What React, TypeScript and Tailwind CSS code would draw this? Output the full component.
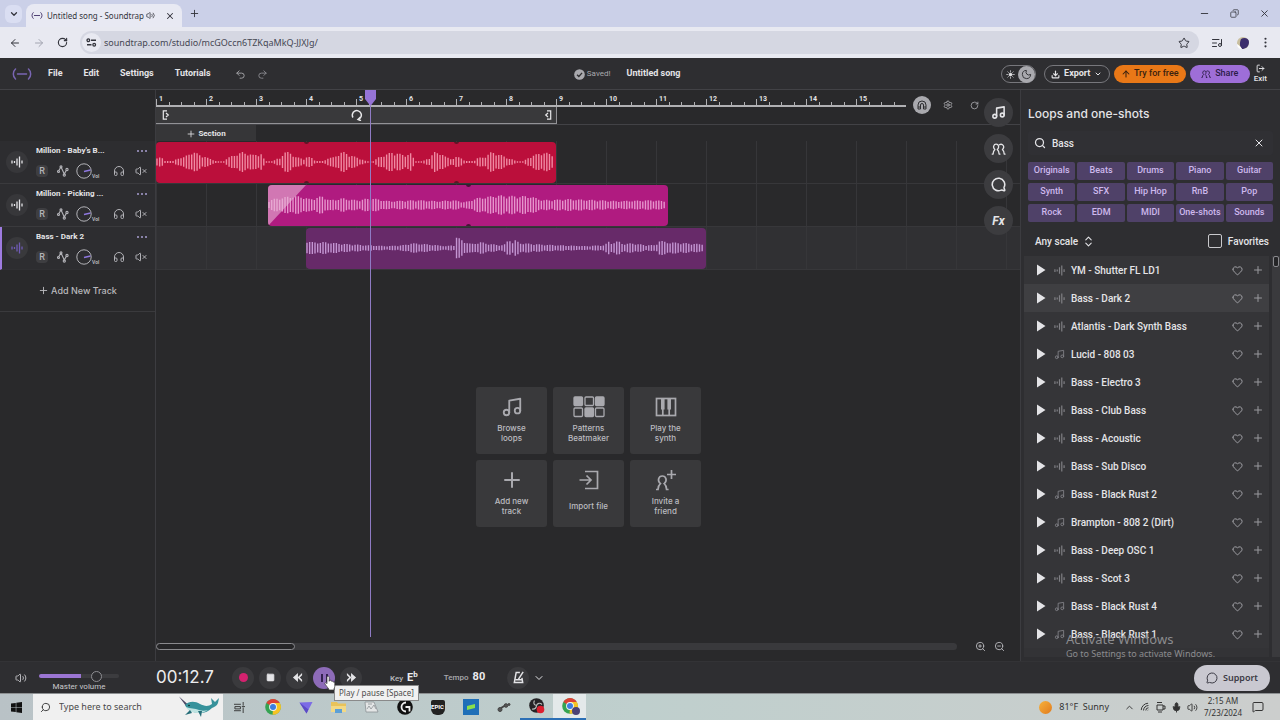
import React from "react";
import {
  ArrowLeft,
  ArrowRight,
  ArrowUp,
  ChevronDown,
  ChevronUp,
  ChevronsUpDown,
  Copy,
  Download,
  EllipsisVertical,
  Headphones,
  Heart,
  ListMusic,
  LogOut,
  MessageCircle,
  MessageSquare,
  Mic,
  Minus,
  Moon,
  Music,
  Play,
  Plus,
  Redo2,
  RotateCw,
  Search,
  Settings,
  SlidersHorizontal,
  Square,
  Star,
  Sun,
  Undo2,
  Volume2,
  VolumeX,
  Wifi,
  X,
  ZoomIn,
  ZoomOut,
} from "lucide-react";

type Point = [number, number];

const beatLoop: Point[] = [
  [0, 5], [5, 5], [9, 1], [18, 1], [21, 4], [28, 5], [35, 10], [38, 10], [50, 5], [58, 2], [60, 0.8], [68, 0.8],
  [71, 4], [78, 7], [86, 10], [92, 9], [98, 7], [105, 9], [108, 3], [110, 0.8], [117, 0.8], [120, 3], [124, 4],
  [128, 10], [134, 10], [140, 5], [149, 3],
];

const pickingWave: Point[] = [
  [0, 4], [5, 6], [22, 9], [32, 9], [42, 6], [54, 9], [62, 5], [75, 7], [88, 5], [104, 7], [120, 4], [150, 5],
  [170, 4], [186, 5], [196, 3], [201, 4], [208, 7], [230, 10], [248, 9], [262, 9], [275, 5], [300, 6], [330, 5],
  [350, 4], [385, 5], [399, 4],
];

const darkWave: Point[] = [
  [0, 8], [6, 6], [20, 6], [40, 4], [60, 3], [80, 2], [98, 3], [106, 5], [120, 4], [130, 3], [140, 2], [148, 3],
  [150, 12], [153, 10], [158, 7], [165, 4], [175, 6], [185, 4], [195, 3], [200, 4], [203, 11], [206, 5],
  [209, 8], [215, 5], [230, 4], [250, 3], [280, 2], [299, 3], [302, 7], [306, 5], [312, 7], [318, 4], [325, 5],
  [340, 3], [350, 3], [353, 8], [360, 6], [380, 5], [395, 4], [399, 5],
];

function amplitude(points: Point[], x: number): number {
  for (let i = 1; i < points.length; i++) {
    const [x0, y0] = points[i - 1];
    const [x1, y1] = points[i];
    if (x <= x1) return y0 + ((y1 - y0) * (x - x0)) / (x1 - x0);
  }
  return points[points.length - 1][1];
}

function Waveform({ points, period, color }: { points: Point[]; period: number; color: string }) {
  const step = 2.67;
  const bars = Array.from({ length: 149 }, (_, i) => {
    const x = 1 + i * step;
    const base = amplitude(points, x % period);
    const jitter = base < 1.5 ? 1 : 0.68 + 0.32 * Math.abs(Math.sin(i * 2.4));
    const a = base * jitter;
    return `M${x.toFixed(2)} ${(20 - a).toFixed(2)}V${(20 + a).toFixed(2)}`;
  });
  return (
    <svg viewBox="0 0 400 41" className="block h-full w-full" preserveAspectRatio="none" aria-hidden="true">
      <path d={bars.join("")} stroke={color} strokeWidth="1.400" fill="none" />
    </svg>
  );
}

function WaveIcon({ className }: { className: string }) {
  return (
    <svg viewBox="0 0 12 12" className={className} fill="none" stroke="currentColor" strokeWidth="1.300" aria-hidden="true">
      <path d="M1 4.500v3M3.500 5v2M6 2.500v7M8.500.5v11M11 4.500v3" />
    </svg>
  );
}

function LogoMark({ className }: { className: string }) {
  return (
    <svg viewBox="0 0 20 12" className={className} fill="none" stroke="currentColor" strokeWidth="1.500" strokeLinecap="round" aria-hidden="true">
      <path d="M3.500 1C.6 3.500.6 8.500 3.500 11M16.500 1c2.900 2.500 2.900 7.500 0 10M5.500 6h9" />
    </svg>
  );
}

function PeopleIcon({ className }: { className: string }) {
  return (
    <svg viewBox="0 0 24 20" className={className} fill="none" stroke="currentColor" strokeWidth="2.200" strokeLinecap="round" strokeLinejoin="round" aria-hidden="true">
      <path d="M1.500 18.500H3c0-3.500.8-5.500 3-7.500-4-3.500-2-9 2-9s6 5.500 2 9c2.200 2 3 4 3 7.500M13.500 3c3.500-2.500 8 .5 7 4.500-.3 1.500-1 2.500-2 3.500 2.200 2 3 4 3 7.500h1.500M13 18.500h1.500" />
    </svg>
  );
}

function PersonPlusIcon() {
  return (
    <svg viewBox="0 0 22 22" className="h-[22px] w-[22px]" fill="none" stroke="currentColor" strokeWidth="1.700" aria-hidden="true">
      <path d="M1 20.500h2c0-3 .6-4.400 2.400-5.900-3.400-2.800-1.900-7.600 1.900-7.600s5.300 4.800 1.900 7.600c1.800 1.500 2.400 2.900 2.400 5.900h2M16.500 1v9M12 5.500h9" />
    </svg>
  );
}

function PatternsIcon() {
  return (
    <svg viewBox="0 0 32 22" className="h-[22px] w-8" fill="none" stroke="currentColor" strokeWidth="1.300" aria-hidden="true">
      <rect x="1" y="1" width="8.500" height="8.500" rx="1" fill="currentColor" />
      <rect x="12" y="1" width="8.500" height="8.500" rx="1" />
      <rect x="22.500" y="1" width="8.500" height="8.500" rx="1" fill="currentColor" />
      <rect x="1" y="12" width="8.500" height="8.500" rx="1" />
      <rect x="12" y="12" width="8.500" height="8.500" rx="1" fill="currentColor" />
      <rect x="22.500" y="12" width="8.500" height="8.500" rx="1" />
    </svg>
  );
}

function PianoIcon() {
  return (
    <svg viewBox="0 0 22 20" className="h-5 w-[22px]" fill="none" stroke="currentColor" strokeWidth="1.700" aria-hidden="true">
      <rect x="1.500" y="1.500" width="19" height="17" />
      <path d="M7.800 12v6M14.200 12v6" />
      <path d="M6 2h3.600v10.500H6zM12.400 2H16v10.500h-3.600z" fill="currentColor" stroke="none" />
    </svg>
  );
}

function ImportIcon() {
  return (
    <svg viewBox="0 0 22 20" className="h-5 w-[22px]" fill="none" stroke="currentColor" strokeWidth="1.700" aria-hidden="true">
      <path d="M7 1.500h12.500v17H7M1.500 10h11M8.500 5.500 13 10l-4.500 4.500" />
    </svg>
  );
}

function AutomationIcon() {
  return (
    <svg viewBox="0 0 12 12" className="h-3 w-3" fill="none" stroke="currentColor" strokeWidth="1.100" aria-hidden="true">
      <path d="M1.800 5.500 4 2l3.300 7L9.500 5" />
      <circle cx="1.500" cy="6.500" r="1" />
      <circle cx="4" cy="1.800" r="1" />
      <circle cx="7.300" cy="10" r="1.100" />
      <circle cx="10" cy="4.500" r="1.100" />
    </svg>
  );
}

function KnobIcon() {
  return (
    <svg viewBox="0 0 16 16" className="h-4 w-4" fill="none" stroke="currentColor" strokeWidth="1" aria-hidden="true">
      <circle cx="8" cy="8" r="7.200" />
      <path d="M8 8.500 14.500 7" stroke="#8f78e0" strokeWidth="1.300" />
    </svg>
  );
}

function MetronomeIcon() {
  return (
    <svg viewBox="0 0 14 14" className="h-[13px] w-[13px]" fill="none" stroke="currentColor" strokeWidth="1.600" aria-hidden="true">
      <path d="M8.500 1.500H4.500L2.500 12.500h9l-.8-5M4 9.500h7M6.500 9.500 12 1" />
    </svg>
  );
}

function MarkerIcon({ flip = false }: { flip?: boolean }) {
  return (
    <svg viewBox="0 0 8 10" className={flip ? "h-[10px] w-2 -scale-x-100" : "h-[10px] w-2"} fill="none" stroke="#e8e8ea" strokeWidth="1.200" aria-hidden="true">
      <path d="M5 .8H1.300v8.400H5M4 3l2.300 2L4 7" />
    </svg>
  );
}

function ChromeLogo() {
  return (
    <svg viewBox="0 0 16 16" className="h-4 w-4" aria-hidden="true">
      <circle cx="8" cy="8" r="7.800" fill="#35a352" />
      <path d="M8 8 1.300 4A7.800 7.800 0 0 1 14.800 4Z" fill="#dd4134" />
      <path d="M8 8V4h6.800A7.800 7.800 0 0 1 7.600 15.800Z" fill="#f6c324" />
      <circle cx="8" cy="8" r="3.900" fill="#f3f3f3" />
      <circle cx="8" cy="8" r="3" fill="#3d7de0" />
    </svg>
  );
}

function Narwhal() {
  return (
    <svg viewBox="0 0 42 22" className="h-[22px] w-[42px]" aria-hidden="true">
      <path d="m1 .5 9 8-2 1.500z" fill="#4a4663" />
      <path d="M7 9c4-4 10-4 15-1 4 2 8 3 12 0l-1-6 4 4 4-4-1 5c-1 3-4 4-6 5-3 3-7 5-12 5-7 0-13-3-15-8Z" fill="#37929b" />
      <path d="M8 11c4 2 9 1 13 3 3 1 6 1 9 0-3 2-6 3-9 3-6 0-11-2-13-6Z" fill="#bfe3e1" />
      <path d="m12 14-5 5 7-2ZM20 15l3 6 1-6Z" fill="#256c78" />
      <circle cx="11" cy="9.500" r=".8" fill="#122" />
    </svg>
  );
}

const menus = ["File", "Edit", "Settings", "Tutorials"];
const tracks = ["Million - Baby's B...", "Million - Picking ...", "Bass - Dark 2"];
const bars = Array.from({ length: 15 }, (_, i) => i + 1);
const genres = [
  "Originals", "Beats", "Drums", "Piano", "Guitar",
  "Synth", "SFX", "Hip Hop", "RnB", "Pop",
  "Rock", "EDM", "MIDI", "One-shots", "Sounds",
];
const loops: { name: string; midi?: boolean }[] = [
  { name: "YM - Shutter FL LD1" },
  { name: "Bass - Dark 2" },
  { name: "Atlantis - Dark Synth Bass" },
  { name: "Lucid - 808 03", midi: true },
  { name: "Bass - Electro 3" },
  { name: "Bass - Club Bass" },
  { name: "Bass - Acoustic" },
  { name: "Bass - Sub Disco" },
  { name: "Bass - Black Rust 2", midi: true },
  { name: "Brampton - 808 2 (Dirt)", midi: true },
  { name: "Bass - Deep OSC 1" },
  { name: "Bass - Scot 3" },
  { name: "Bass - Black Rust 4", midi: true },
  { name: "Bass - Black Rust 1", midi: true },
];

function BrowserChrome() {
  return (
    <div className="shrink-0 bg-[#cbd0e8] font-['Noto_Sans',sans-serif] text-[#33343c]">
      <div className="flex h-[27px] items-end pl-[5px]">
        <button aria-label="Search tabs" className="mb-[4px] flex h-[18px] w-[17px] items-center justify-center rounded-md bg-[#dadef2]">
          <ChevronDown className="h-2.5 w-2.5" strokeWidth={3} />
        </button>
        <div className="ml-[4px] flex h-[23px] w-[156px] items-center rounded-t-lg bg-[#e8e9f3] pl-[5px] pr-[7px]">
          <LogoMark className="h-[7px] w-3 shrink-0 text-[#3b2a63]" />
          <span className="ml-[4px] flex-1 whitespace-nowrap text-[8px]">Untitled song - Soundtrap</span>
          <Volume2 className="mr-[10px] h-[9px] w-[9px] shrink-0" />
          <button aria-label="Close tab">
            <X className="h-2.5 w-2.5" strokeWidth={2.5} />
          </button>
        </div>
        <button aria-label="New tab" className="mb-[8px] ml-[7px]">
          <Plus className="h-[11px] w-[11px]" />
        </button>
        <div className="mb-[8px] ml-auto mr-[10px] flex items-center gap-5">
          <button aria-label="Minimize"><Minus className="h-[11px] w-[11px]" /></button>
          <button aria-label="Restore"><Copy className="h-[9px] w-[9px] -scale-x-100" /></button>
          <button aria-label="Close"><X className="h-[11px] w-[11px]" /></button>
        </div>
      </div>
      <div className="flex h-[31px] items-center bg-[#e8e9f1] pl-[9px] pr-[8px]">
        <button aria-label="Back"><ArrowLeft className="h-3 w-3" /></button>
        <button aria-label="Forward" className="ml-3 text-[#a2a4b0]"><ArrowRight className="h-3 w-3" /></button>
        <button aria-label="Reload" className="ml-3"><RotateCw className="h-[11px] w-[11px]" strokeWidth={2.5} /></button>
        <div className="ml-[12px] flex h-[23px] flex-1 items-center rounded-full bg-[#d5d7e2] pl-[2px] pr-[9px]">
          <span className="flex h-[19px] w-[19px] items-center justify-center rounded-full bg-[#e8e9f1]">
            <svg viewBox="0 0 12 10" className="h-[9px] w-[11px]" fill="none" stroke="currentColor" strokeWidth="1.400" aria-hidden="true">
              <circle cx="2.500" cy="2.500" r="1.500" />
              <path d="M5.500 2.500H11M1 7.500h5" />
              <circle cx="9" cy="7.500" r="1.500" />
            </svg>
          </span>
          <input
            aria-label="Address"
            className="ml-[3px] min-w-0 flex-1 bg-transparent text-[9px] text-[#454753] outline-none"
            defaultValue="soundtrap.com/studio/mcGOccn6TZKqaMkQ-JJXJg/"
          />
          <button aria-label="Bookmark"><Star className="h-3 w-3" /></button>
        </div>
        <button aria-label="Media controls" className="ml-[12px]"><ListMusic className="h-3 w-3" /></button>
        <button aria-label="Profile" className="ml-[13px] flex">
          <svg viewBox="0 0 14 14" className="h-[14px] w-[14px]" aria-hidden="true">
            <circle cx="7" cy="7" r="6" fill="#c9bf9f" />
            <path d="M5 3c3-2 8-1 8 3 0 5-4 7-7 7-2-2-3-5-1-10Z" fill="#3c2e6d" />
            <path d="M1 8c2 1 4 3 5 5-3 0-5-2-5-5Z" fill="#fff" />
          </svg>
        </button>
        <button aria-label="Browser menu" className="ml-[9px]"><EllipsisVertical className="h-[13px] w-[13px]" /></button>
      </div>
    </div>
  );
}

function StudioHeader() {
  return (
    <header className="flex h-8 shrink-0 items-center border-b border-[#424246] bg-[#2e2e31] pl-[12px] pr-[13px] pt-px text-[9px]">
      <a href="#home" aria-label="Home" className="text-[#7a66b4]"><LogoMark className="h-3 w-5" /></a>
      <nav className="ml-4 flex gap-[21px] font-bold">
        {menus.map((m) => (
          <button key={m}>{m}</button>
        ))}
      </nav>
      <div className="ml-[24px] flex gap-[11px] text-[#a7a7ab]">
        <button aria-label="Undo"><Undo2 className="h-[11px] w-[11px]" /></button>
        <button aria-label="Redo" className="text-[#8a8a8f]"><Redo2 className="h-[11px] w-[11px]" /></button>
      </div>
      <div className="mx-auto flex items-center pr-[14px]">
        <svg viewBox="0 0 12 12" className="h-[11px] w-[11px]" aria-hidden="true">
          <circle cx="6" cy="6" r="5.800" fill="#a9a9ae" />
          <path d="m3.300 6.200 2 2 3.500-4" fill="none" stroke="#2e2e31" strokeWidth="1.400" />
        </svg>
        <span className="ml-[2px] text-[8px] text-[#a9a9ae]">Saved!</span>
        <span className="ml-4 font-bold">Untitled song</span>
      </div>
      <div className="flex items-center gap-1">
        <button aria-label="Dark mode" className="mr-1 flex h-[18px] w-[35px] items-center justify-between rounded-full border border-[#77777c] pl-[4px]">
          <Sun className="h-[9px] w-[9px]" fill="currentColor" />
          <span className="flex h-[17px] w-[17px] items-center justify-center rounded-full bg-[#a9a9ae] text-[#2e2e31]">
            <Moon className="h-[11px] w-[11px]" />
          </span>
        </button>
        <button className="flex h-[18px] w-[66px] items-center justify-center gap-[4px] rounded-full border border-[#77777c] font-bold">
          <Download className="h-[9px] w-[9px]" strokeWidth={3} />
          Export
          <ChevronDown className="h-[8px] w-[8px]" strokeWidth={3} />
        </button>
        <button className="flex h-[18px] w-[72px] items-center justify-center gap-[3px] rounded-full bg-[#e97817] font-medium text-[#3a2210]">
          <ArrowUp className="h-[10px] w-[10px]" strokeWidth={2.5} />
          Try for free
        </button>
        <button className="flex h-[18px] w-[60px] items-center justify-center gap-[4px] rounded-full bg-[#9e6ed8] font-medium text-[#2c1c48]">
          <PeopleIcon className="h-2 w-[10px]" />
          Share
        </button>
        <button className="flex flex-col items-center text-[8px] font-medium leading-[12px]">
          <LogOut className="h-[9px] w-[9px]" strokeWidth={2.5} />
          Exit
        </button>
      </div>
    </header>
  );
}

function TrackHeader({ name, active }: { name: string; active: boolean }) {
  return (
    <li className={active ? "flex h-[43px] border-b border-l-2 border-b-[#303033] border-l-[#9e7be0] bg-[#2d2d30] pl-[4px]" : "flex h-[43px] border-b border-[#3a3a3d] bg-[#2d2d30] pl-[6px]"}>
      <span className={active ? "mt-[10px] flex h-[22px] w-[22px] shrink-0 items-center justify-center rounded-full bg-[#39393c] text-[#6f5bb5]" : "mt-[10px] flex h-[22px] w-[22px] shrink-0 items-center justify-center rounded-full bg-[#37373a]"}>
        <WaveIcon className="h-3 w-3" />
      </span>
      <div className="ml-2 flex flex-1 flex-col pr-[8px]">
        <div className="mt-[4px] flex h-3 items-center justify-between text-[8px] font-bold">
          <span className="whitespace-nowrap">{name}</span>
          <button aria-label={`${name} options`} className="flex gap-[2px]">
            <i className="h-[2px] w-[2px] rounded-full bg-[#a99fd0]" />
            <i className="h-[2px] w-[2px] rounded-full bg-[#a99fd0]" />
            <i className="h-[2px] w-[2px] rounded-full bg-[#a99fd0]" />
          </button>
        </div>
        <div className="mt-[6px] flex h-4 items-center text-[#b3b3b8]">
          <button aria-label={`Record ${name}`} className="h-3 w-3 rounded-sm bg-[#3e3e41] text-[9px] font-medium leading-3">R</button>
          <button aria-label={`Automation ${name}`} className="ml-[9px]"><AutomationIcon /></button>
          <button aria-label={`Volume ${name}`} className="ml-[7px] flex items-end text-[5px] font-bold leading-[5px]">
            <KnobIcon />
            Vol
          </button>
          <button aria-label={`Solo ${name}`} className="ml-auto"><Headphones className="h-3 w-3" /></button>
          <button aria-label={`Mute ${name}`} className="ml-[10px]"><VolumeX className="h-3 w-3" /></button>
        </div>
      </div>
    </li>
  );
}

function Sidebar() {
  return (
    <aside className="w-[156px] shrink-0 border-r border-[#3c3c40] pt-[51px]">
      <ul>
        {tracks.map((t, i) => (
          <TrackHeader key={t} name={t} active={i === 2} />
        ))}
      </ul>
      <button className="flex h-[42px] w-full items-center justify-center gap-[2px] border-b border-[#3a3a3d] font-['Inter',sans-serif] text-[9px] font-medium text-[#b9b9bd]">
        <Plus className="h-[11px] w-[11px]" />
        Add New Track
      </button>
    </aside>
  );
}

function Tile({ icon, children }: { icon: React.ReactNode; children: React.ReactNode }) {
  return (
    <button className="flex h-[67px] w-[71px] flex-col items-center rounded-[3px] bg-[#39393b] pt-[9px] text-[#a9a9ae]">
      <span className="flex h-[22px] items-center">{icon}</span>
      <span className="flex h-[30px] items-center text-center font-['Inter',sans-serif] text-[8px] font-medium leading-[10px] text-[#bcbcc0]">
        <span>{children}</span>
      </span>
    </button>
  );
}

const lane = "h-[43px] border-b border-[#37373a] bg-[linear-gradient(to_right,#363639_1px,transparent_1px)] bg-[size:50px_100%] pt-px";
const clip = "h-[41px] w-[400px] overflow-hidden rounded-[4px]";
const round = "flex h-[29px] w-[29px] items-center justify-center rounded-full bg-[#3c3c3f]";

function Timeline() {
  return (
    <main className="relative flex min-w-0 flex-1 flex-col">
      <div className="flex h-[17px] shrink-0">
        <ol className="flex items-end border-b-2 border-[#b0b0b3]">
          {bars.map((b) => (
            <li key={b} className="w-[50px]">
              <div className="pl-[3px] text-[7px] font-bold leading-[6px]">{b}</div>
              <div className="grid h-[3px] grid-cols-4 items-end">
                <i className="-mt-[3px] h-[6px] border-l border-[#b0b0b3]" />
                <i className="h-[3px] border-l border-[#b0b0b3]" />
                <i className="h-[3px] border-l border-[#b0b0b3]" />
                <i className="h-[3px] border-l border-[#b0b0b3]" />
              </div>
            </li>
          ))}
        </ol>
        <div className="ml-[7px] mt-[6px] flex h-[18px] items-center text-[#b3b3b8]">
          <button aria-label="Snap to grid" className="flex h-[18px] w-[18px] items-center justify-center rounded-full bg-[#a9a9ae] text-[#2e2e31]">
            <svg viewBox="0 0 10 10" className="h-[10px] w-[10px]" fill="none" stroke="currentColor" strokeWidth="1" aria-hidden="true">
              <path d="M1 9V5a4 4 0 0 1 8 0v4H6.500V5a1.500 1.500 0 0 0-3 0v4ZM1 7h2.500M6.500 7H9" />
            </svg>
          </button>
          <button aria-label="Timeline settings" className="ml-[12px]"><Settings className="h-[10px] w-[10px]" /></button>
          <button aria-label="Toggle loop" className="ml-[17px]"><RotateCw className="h-[9px] w-[9px]" /></button>
        </div>
      </div>
      <div className="flex h-[18px] shrink-0 border-b border-[#424246]">
        <div className="flex w-[401px] items-center justify-between border-b border-r border-[#929296] bg-[#39393b] pl-[6px] pr-[4px]">
          <MarkerIcon />
          <svg viewBox="0 0 12 12" className="h-3 w-3" fill="none" stroke="#e8e8ea" strokeWidth="1.500" aria-hidden="true">
            <path d="M2 8.500A4.500 4.500 0 1 1 7.500 10.300M9.500 8 7 10.400l3 1.300" />
          </svg>
          <MarkerIcon flip />
        </div>
      </div>
      <button className="flex h-[16px] w-[100px] shrink-0 items-center justify-center gap-[2px] bg-[#363638] pt-px text-[8px] font-bold">
        <Plus className="h-[10px] w-[10px]" />
        Section
      </button>
      <div className={lane}>
        <div className={`${clip} relative bg-[#bb0f3b]`}>
          <Waveform points={beatLoop} period={150} color="#f08aa2" />
          <i className="absolute -top-[3px] left-[148px] h-[5px] w-[5px] rounded-full bg-[#5f1426]" />
          <i className="absolute -top-[3px] left-[298px] h-[5px] w-[5px] rounded-full bg-[#5f1426]" />
          <i className="absolute -bottom-[3px] left-[148px] h-[5px] w-[5px] rounded-full bg-[#5f1426]" />
          <i className="absolute -bottom-[3px] left-[298px] h-[5px] w-[5px] rounded-full bg-[#5f1426]" />
        </div>
      </div>
      <div className={lane}>
        <div className={`${clip} relative ml-[112px] bg-[#b01b80]`}>
          <Waveform points={pickingWave} period={400} color="#e795cd" />
          <svg viewBox="0 0 38 41" className="absolute left-0 top-0 h-[41px] w-[38px]" aria-hidden="true">
            <path d="M0 0h38L0 41Z" fill="#e7b5d6" fillOpacity=".6" />
          </svg>
          <i className="absolute -top-[3px] left-[198px] h-[5px] w-[5px] rounded-full bg-[#4a1038]" />
          <i className="absolute -bottom-[3px] left-[198px] h-[5px] w-[5px] rounded-full bg-[#4a1038]" />
        </div>
      </div>
      <div className={`${lane} bg-[#303033]`}>
        <div className={`${clip} ml-[150px] bg-[#672a69]`}>
          <Waveform points={darkWave} period={400} color="#c496d3" />
        </div>
      </div>
      <div className="flex flex-1 items-center justify-center pl-px pt-3">
        <div className="grid grid-cols-3 gap-[6px]">
          <Tile icon={<Music className="h-[22px] w-[22px]" />}>Browse<br />loops</Tile>
          <Tile icon={<PatternsIcon />}>Patterns<br />Beatmaker</Tile>
          <Tile icon={<PianoIcon />}>Play the<br />synth</Tile>
          <Tile icon={<Plus className="h-6 w-6" />}>Add new<br />track</Tile>
          <Tile icon={<ImportIcon />}>Import file</Tile>
          <Tile icon={<PersonPlusIcon />}>Invite a<br />friend</Tile>
        </div>
      </div>
      <div className="flex h-[30px] shrink-0 items-center pr-[15px] text-[#b9b9bd]">
        <div className="h-[7px] flex-1 rounded-full bg-[#39393c]">
          <div className="h-[7px] w-[139px] rounded-full border border-[#8a8a8e] bg-[#252527]" />
        </div>
        <button aria-label="Zoom in" className="ml-[18px]"><ZoomIn className="h-[11px] w-[11px]" /></button>
        <button aria-label="Zoom out" className="ml-[8px]"><ZoomOut className="h-[11px] w-[11px]" /></button>
      </div>

      <div className="pointer-events-none absolute bottom-6 left-[208px] top-0 flex w-[13px] flex-col items-center">
        <svg viewBox="0 0 13 16" className="h-4 w-[13px] shrink-0" aria-hidden="true">
          <path d="M1 0h11v9l-5.500 7L1 9Z" fill="#9573d6" />
        </svg>
        <div className="w-px flex-1 bg-[#8f7bc4]" />
      </div>

      <div className="absolute right-[7px] top-[8px] flex flex-col gap-[7px]">
        <button aria-label="Loops" className={round}><Music className="h-[15px] w-[15px]" strokeWidth={2.5} /></button>
        <button aria-label="Collaborators" className={round}><PeopleIcon className="h-3 w-[15px]" /></button>
        <button aria-label="Chat" className={round}><MessageCircle className="h-[15px] w-[15px] -scale-x-100" strokeWidth={2.5} /></button>
        <button aria-label="Effects" className={`${round} text-[12px] font-bold italic`}>Fx</button>
      </div>
    </main>
  );
}

function LoopPanel() {
  return (
    <section className="relative flex w-[260px] shrink-0 flex-col border-l border-[#3c3c40] bg-[#2e2e31] pt-[15px]">
      <h2 className="pl-[7px] font-['Inter',sans-serif] text-[12px] font-medium leading-[18px]">Loops and one-shots</h2>
      <div className="mx-[7px] mt-[8px] flex h-[24px] items-center rounded-[3px] bg-[#303034] pl-[6px] pr-[8px]">
        <Search className="h-3 w-3" strokeWidth={2.5} />
        <input aria-label="Search loops" defaultValue="Bass" className="ml-[6px] h-[14px] min-w-0 flex-1 bg-transparent pt-px text-[10px] font-medium outline-none" />
        <button aria-label="Clear search"><X className="h-3 w-3" /></button>
      </div>
      <div className="mx-[7px] mt-[7px] grid grid-cols-5 gap-x-[2px] gap-y-[3px]">
        {genres.map((g) => (
          <button key={g} className="h-[18px] rounded-[2px] bg-[#4f4168] text-[9px] font-medium text-[#cdb8ec]">{g}</button>
        ))}
      </div>
      <div className="mt-[9px] flex h-[20px] items-center pl-[14px] pr-[11px] text-[10px] font-medium">
        <button className="flex items-center gap-1">
          Any scale
          <ChevronsUpDown className="h-[13px] w-[13px]" />
        </button>
        <label className="ml-auto flex items-center gap-[6px]">
          <input type="checkbox" className="h-[14px] w-[14px] appearance-none rounded-[2px] border border-[#c9c9cc]" />
          Favorites
        </label>
      </div>
      <div className="mt-[5px] flex min-h-0 flex-1">
        <ul className="ml-[3px] flex-1 overflow-hidden bg-[#333336]">
          {loops.map((l, i) => (
            <li key={l.name} className={i === 1 ? "flex h-[28px] items-center bg-[#3f3f42] pl-[12px] pr-[5px]" : "flex h-[28px] items-center bg-[#353538] pl-[12px] pr-[5px]"}>
              <button aria-label={`Play ${l.name}`}>
                <svg viewBox="0 0 10 12" className="h-3 w-[10px]" fill="currentColor" aria-hidden="true"><path d="M1 .5 9.500 6 1 11.500Z" /></svg>
              </button>
              <span className="ml-[7px] flex w-3 justify-center text-[#808085]">
                {l.midi ? <Music className="h-[11px] w-[11px]" /> : <WaveIcon className="h-[11px] w-[11px]" />}
              </span>
              <span className="ml-[6px] flex-1 whitespace-nowrap text-[10px] font-medium">{l.name}</span>
              <button aria-label={`Favorite ${l.name}`} className="text-[#a9a9ae]"><Heart className="h-[11px] w-[11px]" /></button>
              <button aria-label={`Add ${l.name}`} className="ml-[9px] text-[#9a9a9e]"><Plus className="h-3 w-3" /></button>
            </li>
          ))}
        </ul>
        <div className="ml-[3px] w-2 bg-[#3a3a3d]">
          <div className="ml-px h-[11px] w-[6px] rounded-[2px] border border-[#8a8a8e] bg-[#252527]" />
        </div>
      </div>
      <div className="h-[4px] shrink-0 bg-[#2e2e31]" />
      <div className="pointer-events-none absolute bottom-0 left-[45px] whitespace-nowrap font-['Noto_Sans',sans-serif] text-[#8c8c8f]">
        <div className="text-[13px] leading-4">Activate Windows</div>
        <div className="text-[9px] leading-[14px]">Go to Settings to activate Windows.</div>
      </div>
    </section>
  );
}

const knob = "flex h-[22px] w-[22px] items-center justify-center rounded-full bg-[#3a3a3d]";

function Transport() {
  return (
    <footer className="relative z-10 flex h-8 shrink-0 items-center border-t border-[#333336] bg-[#2e2e31] pl-[15px] pr-[10px]">
      <button aria-label="Mute all" className="text-[#b9b9bd]"><Volume2 className="h-3 w-3" /></button>
      <label className="ml-3 flex w-[80px] flex-col items-center pt-[10px] text-[8px] leading-[9px] text-[#c9c9cc]">
        <input
          type="range"
          defaultValue={75}
          className="mb-[4px] h-1 w-full appearance-none rounded-full bg-[linear-gradient(to_right,#9b75d3_53%,#3c3c3f_53%)] [&::-webkit-slider-thumb]:h-[11px] [&::-webkit-slider-thumb]:w-[11px] [&::-webkit-slider-thumb]:appearance-none [&::-webkit-slider-thumb]:rounded-full [&::-webkit-slider-thumb]:border [&::-webkit-slider-thumb]:border-[#8f8f93] [&::-webkit-slider-thumb]:bg-[#2e2e31]"
        />
        Master volume
      </label>
      <time className="ml-[37px] w-[76px] font-['Inter',sans-serif] text-[17px] text-[#ececee]">00:12.7</time>
      <div className="flex gap-[5px]">
        <button aria-label="Record" className={knob}><i className="h-[9px] w-[9px] rounded-full bg-[#d3226f]" /></button>
        <button aria-label="Stop" className={knob}><Square className="h-[9px] w-[9px]" fill="currentColor" /></button>
        <button aria-label="Rewind" className={knob}>
          <svg viewBox="0 0 12 12" className="h-[11px] w-[11px]" fill="currentColor" aria-hidden="true"><path d="M6.500 1v10L1 6ZM11 1v2.500L8.500 6 11 8.500V11L6 6Z" /></svg>
        </button>
        <div className="relative">
          <button aria-label="Pause" className="flex h-[22px] w-[22px] items-center justify-center gap-[3px] rounded-full bg-[#8d6bb8]">
            <i className="h-[8px] w-[2px] bg-[#33224f]" />
            <i className="h-[8px] w-[2px] bg-[#33224f]" />
          </button>
          <span role="tooltip" className="absolute left-[21px] top-[18px] whitespace-nowrap border border-[#8a8a8a] bg-[#f1f1f1] px-[4px] font-['Noto_Sans',sans-serif] text-[8px] leading-[14px] text-[#4c4c4c]">
            Play / pause [Space]
          </span>
          <svg viewBox="0 0 12 16" className="absolute left-[11px] top-[8px] h-4 w-3" aria-hidden="true">
            <path d="M4 1.200c.9 0 1.200.5 1.200 1.300v3.800l.2-1c1-.3 1.700.1 1.900.9 1-.3 1.600.1 1.800.9 1-.2 1.700.3 1.700 1.300v3.100c0 1-.6 1.500-.8 2.300v1.200H4.800v-1C3.700 12.500 2 10.500.9 8.900c-.3-.9.6-1.500 1.300-1l.8.8V2.500c0-.8.3-1.300 1-1.300Z" fill="#fff" stroke="#333" strokeWidth=".7" />
          </svg>
        </div>
        <button aria-label="Forward" className={knob}>
          <svg viewBox="0 0 12 12" className="h-[11px] w-[11px]" fill="currentColor" aria-hidden="true"><path d="M1 1v2.500L3.500 6 1 8.500V11l5-5ZM5.500 1 11 6l-5.500 5Z" /></svg>
        </button>
      </div>
      <button className="ml-[28px] flex items-baseline gap-1 text-[8px] font-medium text-[#b9b9bd]">
        Key
        <span className="text-[11px] font-bold leading-4 text-[#ececee]">E<sup className="text-[8px]">b</sup></span>
      </button>
      <button className="ml-[26px] flex items-baseline gap-1 text-[8px] font-medium text-[#a9a9ae]">
        Tempo
        <span className="text-[11px] font-bold text-[#ececee]">80</span>
      </button>
      <button aria-label="Metronome" className={`${knob} ml-[22px]`}><MetronomeIcon /></button>
      <button aria-label="Metronome options" className="ml-[4px]"><ChevronDown className="h-3 w-3" /></button>
      <button className="ml-auto flex h-[26px] w-[76px] items-center justify-center gap-[5px] rounded-full bg-[#c9c8d0] font-['Noto_Sans',sans-serif] text-[9px] font-semibold text-[#3c3b45]">
        <MessageCircle className="h-3 w-3" />
        Support
      </button>
    </footer>
  );
}

const app = "flex h-full w-[33px] items-center justify-center";

function Taskbar() {
  return (
    <div className="flex h-[27px] shrink-0 items-center border-t border-[#8c8f91] bg-linear-to-r from-[#b9c2c6] via-[#bfcfcd] to-[#cccecd] font-['Noto_Sans',sans-serif] text-[9px] text-[#333]">
      <button aria-label="Start" className={app}>
        <svg viewBox="0 0 12 12" className="h-[11px] w-[11px]" fill="#111" aria-hidden="true">
          <path d="M0 1.700 5.200 1v4.700H0ZM5.800.9 12 0v5.700H5.800ZM0 6.300h5.200V11L0 10.300ZM5.800 6.300H12V12l-6.200-.9Z" />
        </svg>
      </button>
      <label className="flex h-full w-[190px] items-center bg-[#f0f0f0] pl-[7px] pr-[3px]">
        <Search className="h-[11px] w-[11px] -scale-x-100" />
        <input aria-label="Search Windows" placeholder="Type here to search" className="ml-[8px] min-w-0 flex-1 bg-transparent placeholder:text-[#4a4a4a]" />
        <Narwhal />
      </label>
      <button aria-label="Task view" className={app}>
        <svg viewBox="0 0 12 12" className="h-[11px] w-[11px]" fill="none" stroke="#333" aria-hidden="true">
          <path d="M0 2.500h7.500M0 9.500h7.500M1 5h6v2.500H1ZM10 0v4M10 6v6M8.500 5H12" />
        </svg>
      </button>
      <button aria-label="Chrome" className={app}><ChromeLogo /></button>
      <button aria-label="VPN" className={app}>
        <svg viewBox="0 0 14 13" className="h-[13px] w-[14px]" aria-hidden="true">
          <path d="M.5 1.500 13.500 1 7.500 12.500Z" fill="#7c6be6" />
          <path d="m.5 1.500 7 11 2-4Z" fill="#5b4bc4" />
        </svg>
      </button>
      <button aria-label="File Explorer" className={app}>
        <svg viewBox="0 0 15 12" className="h-3 w-[15px]" aria-hidden="true">
          <path d="M0 1h6l1 1.500h8V11H0Z" fill="#e9c35a" />
          <path d="M0 5h15v6H0Z" fill="#f3d985" />
          <path d="M4 8h7v4H4Z" fill="#5c9fd6" />
        </svg>
      </button>
      <button aria-label="Notes" className={app}>
        <svg viewBox="0 0 15 12" className="h-3 w-[15px]" fill="#e4e6e6" stroke="#8b9296" strokeWidth=".8" aria-hidden="true">
          <path d="M1 1h9l4 10H2ZM3 8l2-3 2 3 3-4 2 4M4 3h4" />
        </svg>
      </button>
      <button aria-label="G Hub" className={app}>
        <svg viewBox="0 0 16 16" className="h-4 w-4" fill="none" aria-hidden="true">
          <circle cx="8" cy="8" r="7.800" fill="#111" />
          <path d="M9 3.500a4.500 4.500 0 1 0 0 9M8.500 8h4v4.500" stroke="#eee" strokeWidth="1.800" />
        </svg>
      </button>
      <button aria-label="Epic Games" className={app}>
        <span className="flex h-[15px] w-[14px] items-center justify-center rounded-[2px] rounded-b-md bg-[#222] font-['Roboto',sans-serif] text-[6px] font-bold leading-none text-white">EPIC</span>
      </button>
      <button aria-label="Game" className={app}>
        <svg viewBox="0 0 16 16" className="h-4 w-4" aria-hidden="true">
          <path d="M0 0h16v16H0Z" fill="#1f6fb8" />
          <path d="m4 7 8-2v4l-8 2Z" fill="#8be04b" />
        </svg>
      </button>
      <button aria-label="Controller" className={app}>
        <svg viewBox="0 0 14 10" className="h-[10px] w-[14px]" fill="#555" stroke="#444" aria-hidden="true">
          <circle cx="3" cy="7.500" r="2" />
          <path d="m4 6 5-3" strokeWidth="2" />
          <circle cx="9" cy="3.500" r="1.800" />
          <circle cx="12" cy="2.500" r="1" />
        </svg>
      </button>
      <button aria-label="OBS" className={`${app} border-b-2 border-[#2c6fb5]`}>
        <svg viewBox="0 0 16 16" className="h-4 w-4" aria-hidden="true">
          <circle cx="7.500" cy="7.500" r="7.300" fill="#252326" />
          <path d="M7.500 7.500C5 7 4 5 5.500 2.500M7.500 7.500c1-2.500 3.500-3 5.500-1M7.500 7.500c0 2-1.500 4-4.500 3.500" stroke="#bbb" strokeWidth="1.200" fill="none" />
          <circle cx="11.500" cy="11.500" r="3.800" fill="#dd1f2f" />
        </svg>
      </button>
      <button aria-label="Chrome window" className={`${app} border-b-2 border-[#2c6fb5] bg-[#e4e9ea]`}>
        <span className="relative">
          <ChromeLogo />
          <i className="absolute -bottom-px -right-[2px] h-2 w-2 rounded-full bg-[#4b4276]" />
        </span>
      </button>
      <div className="ml-auto flex items-center pr-[16px]">
        <i className="h-[13px] w-[13px] rounded-full bg-linear-to-br from-[#f7b23b] to-[#e07a1c]" />
        <span className="ml-[7px] whitespace-pre">81°F  Sunny</span>
        <ChevronUp className="ml-[15px] h-[11px] w-[11px]" />
        <Wifi className="ml-[5px] h-[11px] w-[11px] -rotate-45" />
        <svg viewBox="0 0 10 12" className="ml-[5px] h-3 w-[10px]" fill="none" stroke="#333" aria-hidden="true">
          <path d="M1 1.500h5M1 4h6v5H1ZM7 5h2v3H7M2 11h4" />
        </svg>
        <Mic className="ml-[5px] h-[11px] w-[11px]" fill="currentColor" />
        <Volume2 className="ml-[5px] h-[11px] w-[11px]" />
        <span className="ml-[6px] w-[38px] whitespace-nowrap text-center text-[8px] leading-[12px]">
          2:15 AM
          <br />
          7/23/2024
        </span>
        <MessageSquare className="ml-[10px] h-3 w-3" />
      </div>
    </div>
  );
}

export default function App() {
  return (
    <div className="flex h-screen min-h-[640px] flex-col overflow-hidden bg-[#29292b] font-['Roboto',sans-serif] text-[#e4e4e7]">
      <BrowserChrome />
      <StudioHeader />
      <div className="flex min-h-0 flex-1">
        <Sidebar />
        <Timeline />
        <LoopPanel />
      </div>
      <Transport />
      <Taskbar />
    </div>
  );
}
